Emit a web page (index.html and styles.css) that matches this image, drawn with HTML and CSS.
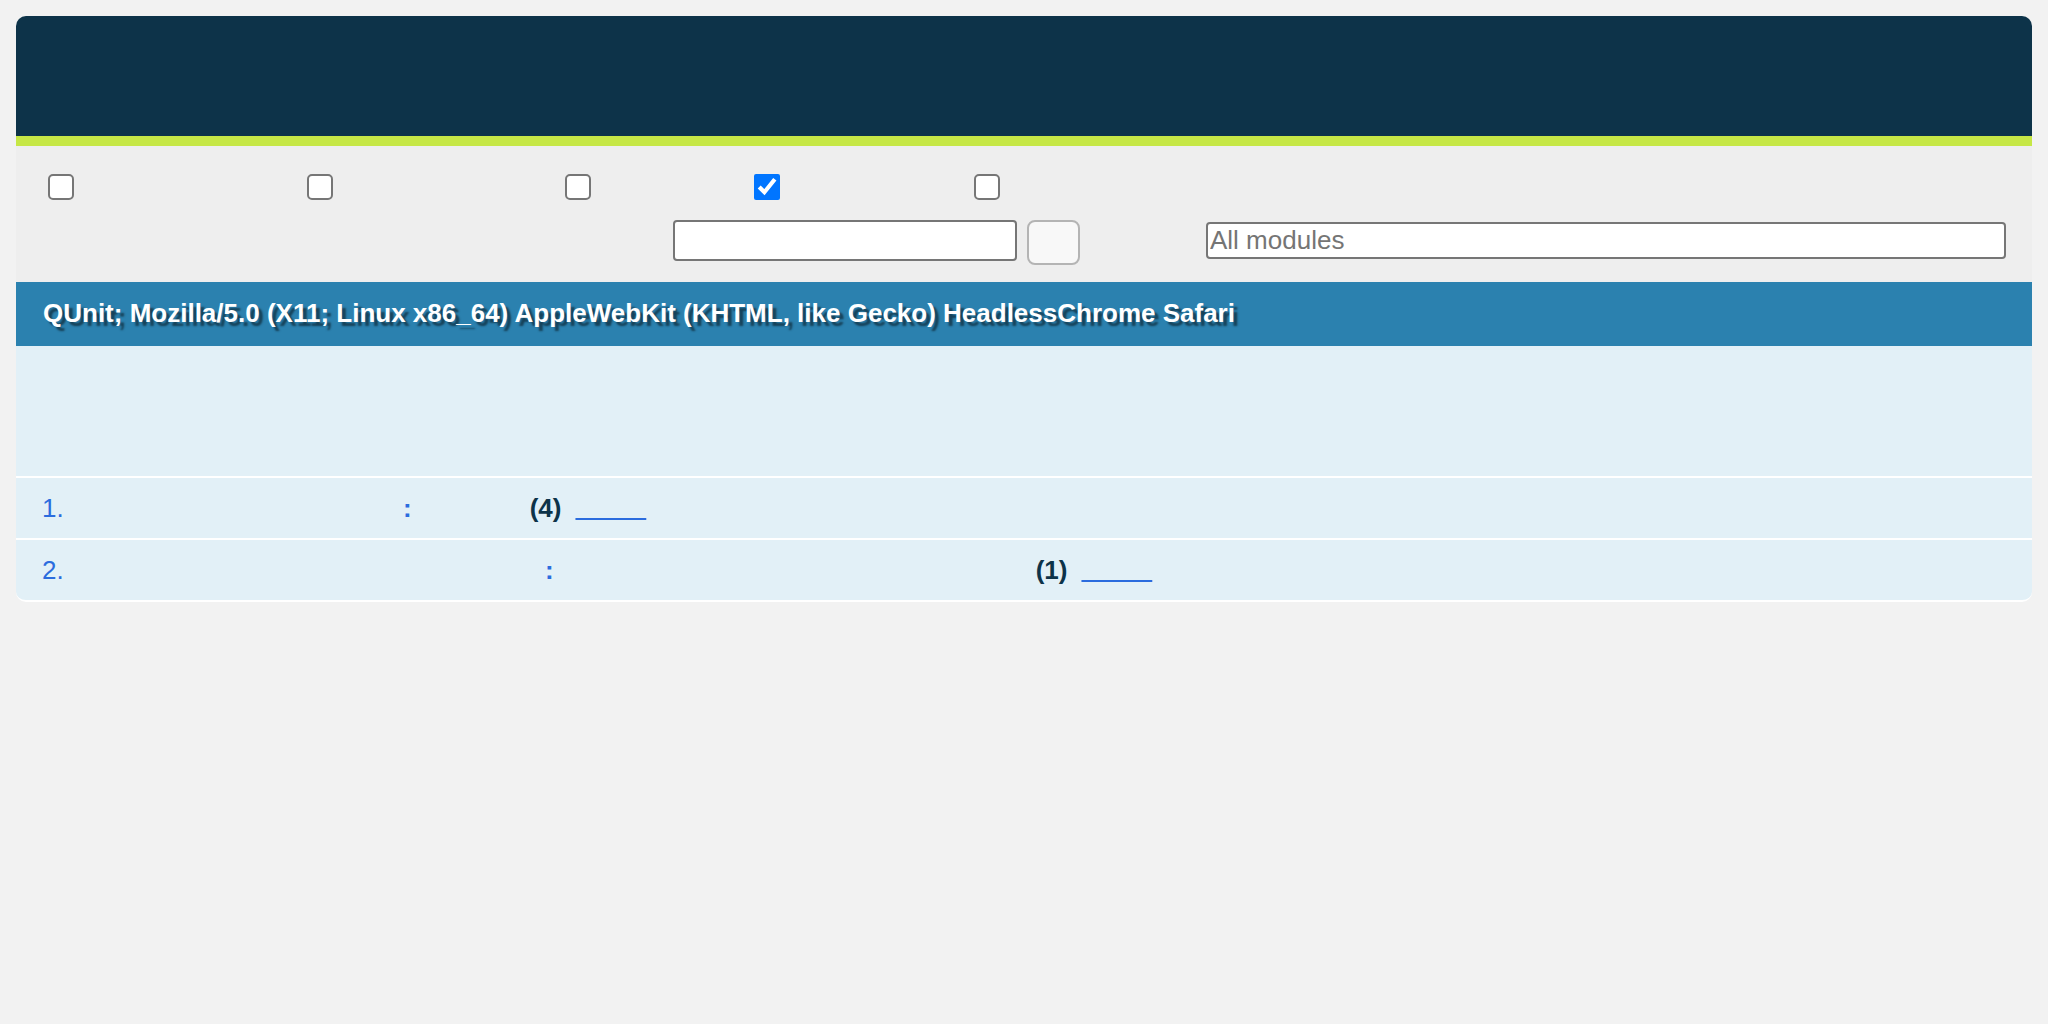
FILE: index.html
```html
<!DOCTYPE html>
<html lang="en">
<head>
<meta charset="utf-8">
<title>QUnit</title>
<link rel="stylesheet" href="styles.css">
</head>
<body>
<div class="qunit">
  <h1 class="qunit-header"><a class="header-link" href="#">QUnit Tests</a></h1>
  <div class="qunit-banner"></div>
  <div class="toolbar">
    <div class="url-config">
      <label class="opt opt-1"><input type="checkbox" class="check"><span class="label-text">Hide passed tests</span></label>
      <label class="opt opt-2"><input type="checkbox" class="check"><span class="label-text">Check for Globals</span></label>
      <label class="opt opt-3"><input type="checkbox" class="check"><span class="label-text">No try-catch</span></label>
      <label class="opt opt-4"><input type="checkbox" class="check" checked><span class="label-text">Coverage</span></label>
      <label class="opt opt-5"><input type="checkbox" class="check"><span class="label-text">Verbose</span></label>
    </div>
    <div class="filters">
      <form class="filter-form">
        <label class="filter-label" for="qunit-filter-input">Filter:</label>
        <input type="text" class="filter-input" id="qunit-filter-input">
        <button type="button" class="go-button" disabled>Go</button>
      </form>
      <div class="module-filter">
        <label class="module-label" for="qunit-modulefilter-input">Module:</label>
        <input type="text" class="module-input" id="qunit-modulefilter-input" placeholder="All modules">
      </div>
    </div>
  </div>
  <h2 class="user-agent">QUnit; Mozilla/5.0 (X11; Linux x86_64) AppleWebKit (KHTML, like Gecko) HeadlessChrome Safari</h2>
  <p class="test-result">Tests completed. 5 assertions of 5 passed, 0 failed.</p>
  <ol class="tests">
    <li class="test"><span class="num">1.</span><strong class="test-title"><span class="module-name mod-1">module</span><span class="colon">:</span><span class="test-name name-1">test</span></strong><b class="counts">(4)</b><a class="rerun" href="#">Rerun</a></li>
    <li class="test"><span class="num">2.</span><strong class="test-title"><span class="module-name mod-2">module</span><span class="colon">:</span><span class="test-name name-2">test</span></strong><b class="counts">(1)</b><a class="rerun" href="#">Rerun</a></li>
  </ol>
</div>
</body>
</html>
```

FILE: styles.css
```css
html, body {
  margin: 0;
  padding: 0;
}

body {
  background: #f2f2f2;
  padding: 16px;
  font-family: "Liberation Sans", Arial, sans-serif;
  font-size: 26px;
}

.qunit {
  display: flex;
  flex-direction: column;
}

.qunit-header {
  margin: 0;
  height: 120px;
  background: #0d3349;
  border-radius: 10px 10px 0 0;
  padding-left: 26px;
  font-size: 39px;
  font-weight: 400;
  line-height: 120px;
}

.header-link {
  color: transparent;
  text-decoration: none;
}

.qunit-banner {
  height: 10px;
  background: #c6e746;
}

.toolbar {
  background: #eeeeee;
  padding: 28px 26px 17px 32px;
  display: flex;
  flex-direction: column;
  gap: 20px;
}

.url-config {
  display: flex;
  height: 26px;
}

.opt {
  display: flex;
  align-items: center;
  gap: 6px;
  white-space: nowrap;
}

.opt-1 { width: 259px; }
.opt-2 { width: 258px; }
.opt-3 { width: 189px; }
.opt-4 { width: 220px; }
.opt-5 { width: 240px; }

.label-text {
  color: transparent;
  font-size: 24px;
  line-height: 26px;
}

.check {
  width: 26px;
  height: 26px;
  margin: 0;
  flex: none;
}

.check:not(:checked) {
  appearance: none;
  box-sizing: border-box;
  background: #ffffff;
  border: 2px solid #767676;
  border-radius: 5px;
}

.filters {
  display: flex;
  justify-content: flex-end;
  align-items: flex-start;
  height: 45px;
}

.filter-form {
  display: flex;
  align-items: flex-start;
  margin: 0;
}

.filter-label {
  color: transparent;
  line-height: 41px;
  margin-right: 8px;
}

.filter-input {
  box-sizing: border-box;
  width: 344px;
  height: 41px;
  border: 2px solid #767676;
  border-radius: 4px;
  background: #fff;
  margin: 0;
  padding: 2px 4px;
  font: inherit;
}

.go-button {
  box-sizing: border-box;
  width: 53px;
  height: 45px;
  margin: 0 0 0 10px;
  border: 2px solid #b4b4b4;
  border-radius: 8px;
  background: #f8f8f8;
  color: transparent;
  font: inherit;
  appearance: none;
}

.module-filter {
  display: flex;
  align-items: flex-start;
  padding-top: 2px;
}

.module-label {
  width: 126px;
  flex: none;
  color: transparent;
  line-height: 37px;
  padding-left: 12px;
  box-sizing: border-box;
}

.module-input {
  box-sizing: border-box;
  width: 800px;
  height: 37px;
  border: 2px solid #767676;
  border-radius: 4px;
  background: #fff;
  margin: 0;
  padding: 0 2px;
  font-family: "Liberation Sans", Arial, sans-serif;
  font-size: 26px;
  color: #333;
}

.module-input::placeholder {
  color: #757575;
}

.user-agent {
  margin: 0;
  height: 64px;
  background: #2b81af;
  color: #ffffff;
  font-size: 26px;
  font-weight: 700;
  line-height: 62px;
  padding-left: 27px;
  text-shadow: 4px 4px 2px rgba(0, 0, 0, 0.5);
  white-space: nowrap;
}

.test-result {
  margin: 0;
  height: 132px;
  box-sizing: border-box;
  padding: 13px 26px;
  background: #e2f0f7;
  border-bottom: 2px solid #ffffff;
  color: transparent;
  line-height: 30px;
}

.tests {
  list-style: none;
  margin: 0;
  padding: 0;
}

.test {
  background: #e2f0f7;
  border-bottom: 2px solid #ffffff;
  padding: 15px 26px;
  line-height: 30px;
  white-space: nowrap;
  color: #2b6cde;
}

.test:last-child {
  border-radius: 0 0 10px 10px;
}

.num {
  display: inline-block;
  width: 29px;
}

.test-title {
  font-weight: 700;
}

.module-name,
.test-name {
  display: inline-block;
  height: 30px;
  vertical-align: top;
  color: transparent;
  text-align: center;
}

.mod-1 { width: 332px; }
.name-1 { width: 118px; }
.mod-2 { width: 474px; }
.name-2 { width: 482px; }

.counts {
  color: #0d3349;
  font-weight: 700;
}

.rerun {
  margin-left: 14px;
  color: transparent;
  text-decoration: underline;
  text-decoration-color: #2b6cde;
  text-decoration-thickness: 2px;
}
```
